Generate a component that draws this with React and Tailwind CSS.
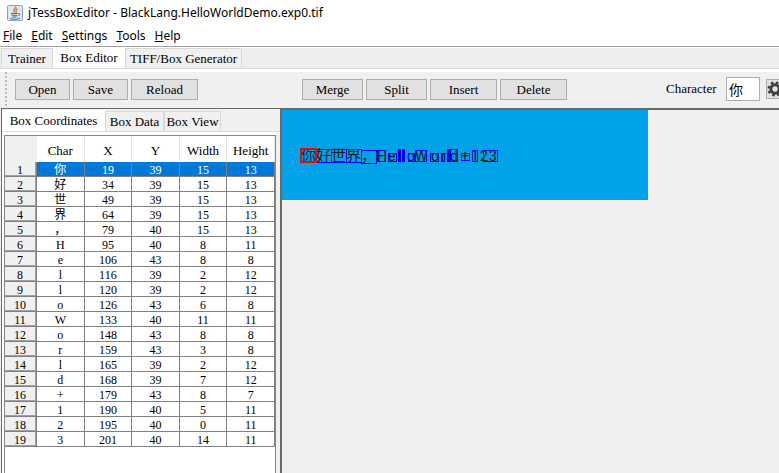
import { useState } from 'react';

const boxes = [
  { char: '你', x: 19, y: 39, w: 15, h: 13 },
  { char: '好', x: 34, y: 39, w: 15, h: 13 },
  { char: '世', x: 49, y: 39, w: 15, h: 13 },
  { char: '界', x: 64, y: 39, w: 15, h: 13 },
  { char: '，', x: 79, y: 40, w: 15, h: 13 },
  { char: 'H', x: 95, y: 40, w: 8, h: 11 },
  { char: 'e', x: 106, y: 43, w: 8, h: 8 },
  { char: 'l', x: 116, y: 39, w: 2, h: 12 },
  { char: 'l', x: 120, y: 39, w: 2, h: 12 },
  { char: 'o', x: 126, y: 43, w: 6, h: 8 },
  { char: 'W', x: 133, y: 40, w: 11, h: 11 },
  { char: 'o', x: 148, y: 43, w: 8, h: 8 },
  { char: 'r', x: 159, y: 43, w: 3, h: 8 },
  { char: 'l', x: 165, y: 39, w: 2, h: 12 },
  { char: 'd', x: 168, y: 39, w: 7, h: 12 },
  { char: '+', x: 179, y: 43, w: 8, h: 7 },
  { char: '1', x: 190, y: 40, w: 5, h: 11 },
  { char: '2', x: 195, y: 40, w: 0, h: 11 },
  { char: '3', x: 201, y: 40, w: 14, h: 11 },
];

// where each glyph of the page image starts
const glyphX = [19, 34, 49, 64, 79, 95, 106, 115, 119, 125, 133, 149, 159, 164, 168, 179, 189, 198, 207];

const menus = ['File', 'Edit', 'Settings', 'Tools', 'Help'];

const JavaIcon = () => (
  <svg width="16" height="16" viewBox="0 0 16 16" fill="none">
    <rect x="0.5" y="0.5" width="15" height="15" rx="1" fill="#dce6ee" stroke="#8aa0b8" />
    <path d="M8.6 1.5c1 1.8-2.6 2.6-1.8 4.2.3.7.9 1 .7 1.8M10.6 3.6c-1.6.7-2.2 1.6-1.4 2.8.3.5 0 1-.4 1.3" stroke="#e8762c" strokeWidth="1.4" />
    <path d="M4 8.5h6.5M4.6 10.3h5.6M5.2 12h4.4M11 8.6c2.4-.6 2.2 1.9-.2 2.3" stroke="#3f6f9f" />
    <path d="M3 13.5c2.6 1 7.8 1 10-.2" stroke="#3f6f9f" />
  </svg>
);

const GearIcon = () => (
  <svg width="16" height="16" viewBox="0 0 16 16" fill="none" stroke="#404040" className="shrink-0">
    <circle cx="8" cy="8" r="6.3" strokeWidth="2.6" strokeDasharray="2.6 2.35" />
    <circle cx="8" cy="8" r="4.2" strokeWidth="3" />
  </svg>
);

const ToolButton = ({ className, children }) => (
  <button className={`${className} h-[21px] shrink-0 border border-[#adadad] bg-[#e1e1e1] leading-[20px]`}>
    {children}
  </button>
);

const Tab = ({ active, onClick, className, children }) => (
  <button
    role="tab"
    aria-selected={active}
    onClick={onClick}
    className={`${className} shrink-0 whitespace-nowrap ${
      active ? 'self-stretch bg-white' : 'h-5 border border-b-0 border-[#d9d9d9] bg-[#f0f0f0]'
    }`}
  >
    {children}
  </button>
);

const BoxTable = ({ selected, onSelect }) => (
  <table className="w-full table-fixed border-separate border-spacing-0 text-center">
    <colgroup>
      <col className="w-8" />
      <col />
      <col />
      <col />
      <col />
      <col />
    </colgroup>
    <thead>
      <tr className="h-[26px]">
        <th aria-label="Row" className="bg-[#f0f0f0] p-0"></th>
        {['Char', 'X', 'Y', 'Width', 'Height'].map((name) => (
          <th key={name} className="border-r border-[#e5e5e5] bg-white p-0 pt-1 font-normal">
            {name}
          </th>
        ))}
      </tr>
    </thead>
    <tbody className="text-[12px]">
      {boxes.map((box, i) => (
        <tr key={i} onClick={() => onSelect(i)} className={i === selected ? 'bg-[#0078d7] text-white' : 'bg-white'}>
          <th className="h-[15px] border-r border-b border-[#808080] bg-[#f0f0f0] p-0 font-normal text-black">
            <div className="h-[14px] border-r border-b border-[#a0a0a0] leading-[16px]">{i + 1}</div>
          </th>
          {[box.char, box.x, box.y, box.w, box.h].map((value, j) => (
            <td key={j} className="h-[15px] border-r border-b border-[#808080] p-0">
              <div className="h-[14px] overflow-hidden leading-[16px]">{value}</div>
            </td>
          ))}
        </tr>
      ))}
    </tbody>
  </table>
);

const PageImage = ({ selected }) => {
  const current = boxes[selected];

  return (
    <svg width="366" height="90" viewBox="0 0 366 90" className="block bg-[#00a2e8]">
      <g fill="#101820" className="font-[Roboto,'Noto_Sans_CJK_SC',sans-serif]">
        {boxes.map((box, i) => (
          <text key={i} x={glyphX[i]} y={51} className={box.char > '~' ? 'text-[15px]' : 'text-[14px]'}>
            {box.char}
          </text>
        ))}
      </g>
      <g stroke="#0000ff" shapeRendering="crispEdges">
        {boxes.map((box, i) => (
          <rect
            key={i}
            x={box.x + 0.5}
            y={box.y + 0.5}
            width={box.w || 0.1}
            height={box.h}
            fill={box.w <= 2 ? '#0000ff' : 'none'}
          />
        ))}
        <rect x={current.x} y={current.y} width={current.w} height={current.h} fill="none" stroke="#ff0000" strokeWidth="2" />
      </g>
    </svg>
  );
};

export default function App() {
  const [tab, setTab] = useState('Box Editor');
  const [view, setView] = useState('Box Coordinates');
  const [selected, setSelected] = useState(0);

  return (
    <div className="flex h-screen flex-col overflow-hidden bg-[#f0f0f0] font-['Liberation_Serif','Noto_Sans_CJK_SC',serif] text-[13px] text-black">
      <header className="shrink-0 border-b border-[#a0a0a0] bg-white font-['Noto_Sans',sans-serif] text-[12px]">
        <div className="flex h-[26px] items-center gap-[5px] px-[7px]">
          <JavaIcon />
          <h1>jTessBoxEditor - BlackLang.HelloWorldDemo.exp0.tif</h1>
        </div>
        <nav className="flex h-5 items-center gap-[9px] px-[3px]">
          {menus.map((name) => (
            <button key={name}>
              <span className="underline">{name[0]}</span>
              {name.slice(1)}
            </button>
          ))}
        </nav>
      </header>

      <div role="tablist" className="flex h-[22px] shrink-0 items-end border-t border-b border-t-white border-b-[#d9d9d9] bg-[#eeeeee] pl-px">
        <Tab active={tab === 'Trainer'} onClick={() => setTab('Trainer')} className="w-[52px]">
          Trainer
        </Tab>
        <Tab active={tab === 'Box Editor'} onClick={() => setTab('Box Editor')} className="w-[72px]">
          Box Editor
        </Tab>
        <Tab active={tab === 'TIFF/Box Generator'} onClick={() => setTab('TIFF/Box Generator')} className="w-[117px]">
          TIFF/Box Generator
        </Tab>
      </div>

      <div className="flex h-[39px] shrink-0 items-center border-t-[3px] border-white pb-0.5 pl-[5px]">
        <div className="mr-2 h-full w-0.5 shrink-0 border-l-2 border-dotted border-[#b8b8b8]"></div>
        <div className="flex shrink-0 gap-[3px]">
          <ToolButton className="w-[55px]">Open</ToolButton>
          <ToolButton className="w-[55px]">Save</ToolButton>
          <ToolButton className="w-[67px]">Reload</ToolButton>
        </div>
        <div className="ml-[104px] flex shrink-0 gap-[3px]">
          <ToolButton className="w-[61px]">Merge</ToolButton>
          <ToolButton className="w-[61px]">Split</ToolButton>
          <ToolButton className="w-[67px]">Insert</ToolButton>
          <ToolButton className="w-[67px]">Delete</ToolButton>
        </div>
        <label htmlFor="character" className="ml-[99px] w-[54px] shrink-0">
          Character
        </label>
        <input
          id="character"
          value={boxes[selected].char}
          readOnly
          className="ml-1.5 h-6 w-[34px] shrink-0 border border-[#abadb3] bg-white px-0.5 text-[14px] outline-none"
        />
        <button aria-label="Character options" className="ml-1.5 flex h-5 w-6 shrink-0 items-center border border-[#adadad] bg-[#e1e1e1]">
          <GearIcon />
        </button>
      </div>

      <main className="ml-px flex min-h-0 flex-1 border-t border-l border-[#696969]">
        <aside className="flex w-[278px] shrink-0 flex-col">
          <div role="tablist" className="flex h-[23px] shrink-0 items-end border-b border-[#d9d9d9] pt-px">
            <Tab active={view === 'Box Coordinates'} onClick={() => setView('Box Coordinates')} className="w-[103px]">
              Box Coordinates
            </Tab>
            <Tab active={view === 'Box Data'} onClick={() => setView('Box Data')} className="w-[59px]">
              Box Data
            </Tab>
            <Tab active={view === 'Box View'} onClick={() => setView('Box View')} className="w-[57px]">
              Box View
            </Tab>
          </div>
          <div className="flex min-h-0 flex-1 bg-white pt-[3px] pl-0.5">
            <div className="flex-1 overflow-hidden border border-b-0 border-[#828790] bg-white">
              <BoxTable selected={selected} onSelect={setSelected} />
            </div>
            <div className="w-1 bg-[#f0f0f0]"></div>
          </div>
        </aside>
        <section className="flex-1 overflow-hidden border-t border-l-2 border-[#696969]">
          <PageImage selected={selected} />
        </section>
      </main>
    </div>
  );
}
